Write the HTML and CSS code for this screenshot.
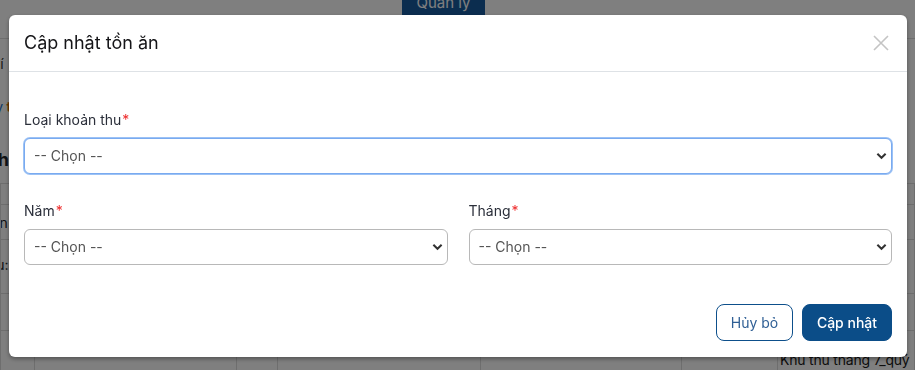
FILE: index.html
```html
<!DOCTYPE html>
<html lang="vi">
<head>
    <meta charset="UTF-8">
    <meta name="viewport" content="width=device-width, initial-scale=1.0">
    <title>Cập nhật tồn ăn</title>
    <link rel="stylesheet" href="styles.css">
</head>
<body>

<div class="page">
    <div class="topbar">
        <span class="tab">Quản lý</span>
    </div>
    <div class="info">
        <p class="line fee">Phí</p>
        <p class="line tip"><span class="link">đây</span> <span class="warn">tồn</span></p>
        <h3 class="line heading">Danh sách khoản thu</h3>
    </div>
    <table class="grid">
        <tr class="head"><td></td><td></td><td></td><td></td><td></td><td></td><td></td><td></td></tr>
        <tr class="r1"><td>Tiền</td><td></td><td></td><td></td><td></td><td></td><td></td><td></td></tr>
        <tr class="r2"><td>Thu:</td><td></td><td></td><td></td><td></td><td></td><td></td><td></td></tr>
        <tr class="r3"><td></td><td></td><td></td><td></td><td></td><td></td><td></td><td></td></tr>
        <tr class="r4"><td></td><td colspan="2"></td><td></td><td></td><td></td><td></td><td class="note">Khu thu tháng 7_quý</td></tr>
    </table>
</div>

<div class="overlay">
    <div class="modal">
        <div class="modal-header">
            <h5 class="modal-title">Cập nhật tồn ăn</h5>
            <button class="close" aria-label="Đóng">
                <svg width="16" height="16" viewBox="0 0 16 16"><path d="M1 1L15 15M15 1L1 15" stroke="#c4c4c4" stroke-width="1.6" fill="none"/></svg>
            </button>
        </div>
        <div class="modal-body">
            <div class="field">
                <label>Loại khoản thu<span class="req">*</span></label>
                <div class="select focus">-- Chọn --</div>
            </div>
            <div class="row">
                <div class="field">
                    <label>Năm<span class="req">*</span></label>
                    <div class="select">-- Chọn --</div>
                </div>
                <div class="field">
                    <label>Tháng<span class="req">*</span></label>
                    <div class="select">-- Chọn --</div>
                </div>
            </div>
        </div>
        <div class="modal-footer">
            <button class="btn outline">Hủy bỏ</button>
            <button class="btn primary">Cập nhật</button>
        </div>
    </div>
</div>

</body>
</html>
```

FILE: styles.css
```css
body {
    margin: 0;
    font-family: Inter, "Noto Sans", sans-serif;
    background: white;
    color: #212529;
    overflow: hidden;
}
.page {
    height: 370px;
    overflow: hidden;
}
.topbar {
    height: 38px;
    border-bottom: 1px solid #ddd;
    padding-left: 402px;
}
.tab {
    display: block;
    width: 83px;
    height: 15px;
    background: #175b9f;
    color: white;
    font-size: 15px;
    line-height: 6px;
    text-align: center;
    overflow: hidden;
}
.line {
    margin: 0;
    font-size: 14px;
    line-height: 20px;
    white-space: nowrap;
}
.fee { margin: 15px 0 0 -17px; color: #333; }
.tip { margin: 23px 0 0 -21px; font-weight: 700; }
.link { color: #1a73c9; font-weight: 400; }
.warn { color: #d36b00; }
.heading { font-size: 18px; line-height: 24px; margin: 31px 0 0 -37px; }
.grid {
    width: 100%;
    border-collapse: collapse;
    margin-top: 11px;
    font-size: 14px;
    table-layout: fixed;
}
.grid td {
    border: 1px solid #ddd;
    padding: 0;
    overflow: hidden;
    white-space: nowrap;
}
.grid .head td:nth-child(1) { width: 33px; }
.grid .head td:nth-child(2) { width: 100px; }
.grid .head td:nth-child(3) { width: 100px; }
.grid .head td:nth-child(4) { width: 40px; }
.grid .head td:nth-child(5) { width: 202px; }
.grid .head td:nth-child(6) { width: 200px; }
.grid .head td:nth-child(7) { width: 95px; }
.grid td:first-child { text-indent: -22px; }
.grid .head td { height: 20px; }
.grid .r1 td { height: 34px; }
.grid .r2 td { height: 37px; vertical-align: top; padding-top: 16px; }
.grid .r3 td { height: 36px; }
.grid .r4 td { height: 40px; }
.grid .note { font-size: 14px; letter-spacing: -0.2px; padding-left: 2px; vertical-align: top; padding-top: 20px; text-indent: 0; color: #1a1a1a; }

.overlay {
    position: fixed;
    inset: 0;
    background: rgba(0, 0, 0, 0.5);
}
.modal {
    position: absolute;
    left: 9px;
    top: 15px;
    width: 898px;
    background: white;
    border-radius: 6px;
    box-shadow: 0 2px 4px rgba(0, 0, 0, 0.35);
}
.modal-header {
    display: flex;
    align-items: center;
    justify-content: space-between;
    padding: 16px 15px;
    border-bottom: 1px solid #dee2e6;
}
.modal-title {
    margin: 0;
    font-size: 18px;
    font-weight: 400;
    line-height: 24px;
    color: #151518;
}
.close {
    border: none;
    background: none;
    padding: 0;
    margin-right: 3px;
    width: 16px;
    height: 16px;
    display: flex;
}
.modal-body {
    padding: 37px 15px 0;
}
.field label {
    display: block;
    font-size: 14px;
    line-height: 21px;
    color: #2b2f3a;
    margin-bottom: 8px;
}
.req { color: #ee2a2a; margin-left: 1px; }
.select {
    height: 34px;
    border: 1px solid #b8b8b8;
    border-radius: 6px;
    padding: 0 9px;
    font-size: 14px;
    line-height: 34px;
    color: #555;
    background: white url("data:image/svg+xml,%3Csvg xmlns='http://www.w3.org/2000/svg' width='12' height='8' viewBox='0 0 12 8'%3E%3Cpath d='M1.5 1.5L6 6L10.5 1.5' stroke='%23333' stroke-width='2.2' fill='none'/%3E%3C/svg%3E") no-repeat right 4px center / 11px 8px;
}
.select.focus {
    border-color: #79aaf0;
    box-shadow: 0 0 0 1px #9cc2f5;
}
.row {
    display: grid;
    grid-template-columns: 1fr 1fr;
    column-gap: 21px;
    margin-top: 26px;
}
.modal-footer {
    display: flex;
    justify-content: flex-end;
    gap: 9px;
    padding: 39px 15px 16px;
}
.btn {
    height: 37px;
    font-family: inherit;
    font-size: 14px;
    border-radius: 8px;
    cursor: pointer;
}
.btn.outline {
    width: 77px;
    background: white;
    border: 1px solid #0d4f8b;
    color: #2f5f95;
}
.btn.primary {
    width: 90px;
    background: #0b4d88;
    border: 1px solid #0b4d88;
    color: white;
    font-weight: 500;
}
```
